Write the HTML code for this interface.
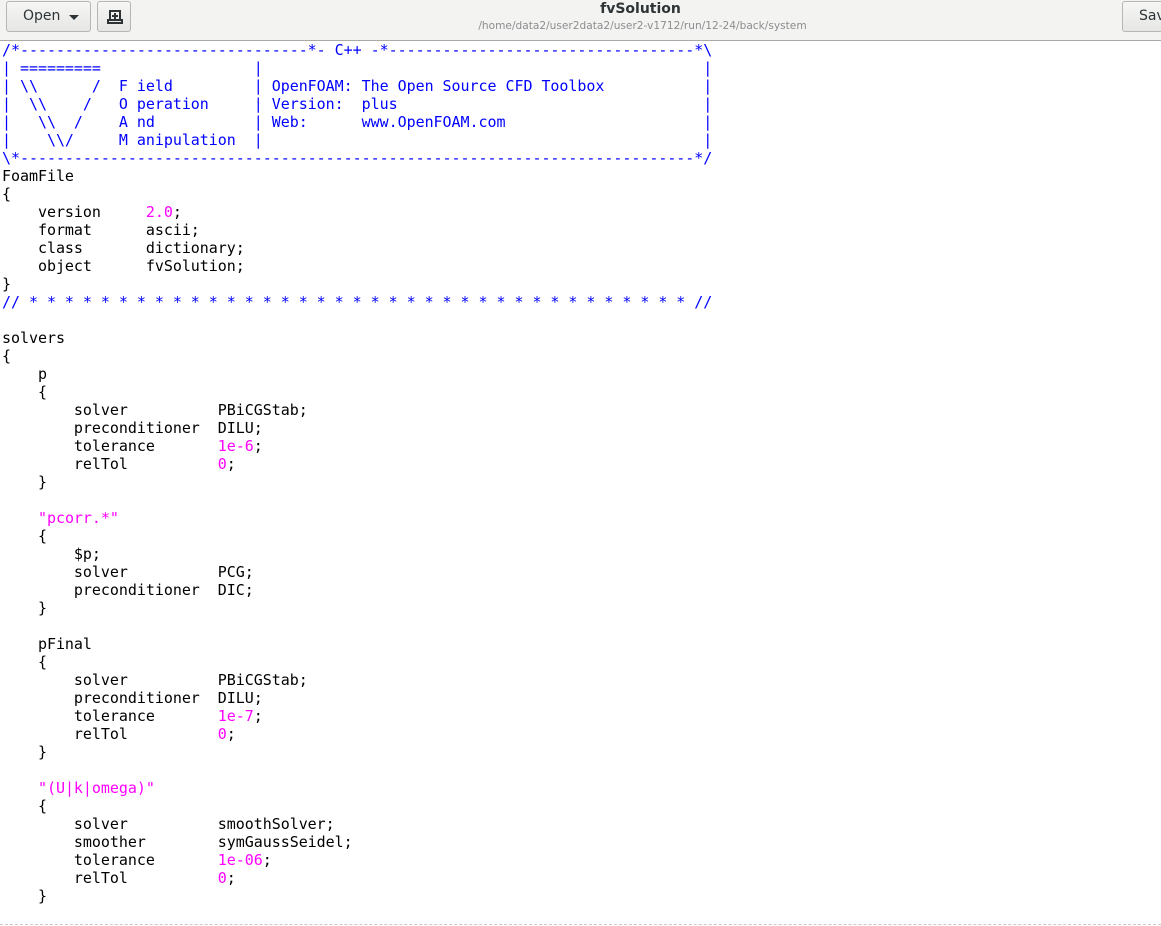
<!DOCTYPE html>
<html><head><meta charset="utf-8"><style>
html,body{margin:0;padding:0;width:1161px;height:926px;overflow:hidden;background:#fff}
.hdr{position:absolute;left:0;top:0;width:1161px;height:40px;background:#f3f3f2;border-bottom:1px solid #a9a9a7;font-family:"DejaVu Sans","Liberation Sans",sans-serif}
.btn{position:absolute;top:1px;height:31px;border:1px solid #b6b6b3;border-radius:3px;background:linear-gradient(#f6f6f5,#e6e6e4);box-sizing:border-box;font-size:14px;color:#2e3436}
.title{position:absolute;left:60px;width:1161px;text-align:center;top:1px;font-size:14px;font-weight:bold;color:#2e3436}
.sub{position:absolute;left:62px;width:1161px;text-align:center;top:20px;font-size:10.6px;color:#8b8e8f}
pre{position:absolute;left:2px;top:41px;margin:0;font-family:"DejaVu Sans Mono","Liberation Mono",monospace;font-size:15px;line-height:18px;letter-spacing:-0.04px;color:#000}
.c{color:#0000ff}.m{color:#ff00ff}
.dash{position:absolute;left:0;top:924px;width:1161px;border-top:1px dashed #c8c8c8}
</style></head><body>
<div class="hdr">
 <div class="btn" style="left:6px;width:85px"><span style="position:absolute;left:16px;top:6px">Open</span><span style="position:absolute;left:62px;top:13px;width:0;height:0;border-left:5px solid transparent;border-right:5px solid transparent;border-top:5px solid #2e3436"></span></div>
 <div class="btn" style="left:97px;width:34px"><svg style="position:absolute;left:9px;top:7px" width="16" height="16" viewBox="0 0 16 16"><path d="M3 2h10v9h-10z M1 11h14v3h-14z" fill="none" stroke="#2e3436" stroke-width="2"/><path d="M8 4v6M5 7h6" stroke="#2e3436" stroke-width="2"/></svg></div>
 <div class="title">fvSolution</div>
 <div class="sub">/home/data2/user2data2/user2-v1712/run/12-24/back/system</div>
 <div class="btn" style="left:1122px;width:60px"><span style="position:absolute;left:16px;top:6px">Save</span></div>
</div>
<pre><span class="c">/*--------------------------------*- C++ -*----------------------------------*\
| =========                 |                                                 |
| \\      /  F ield         | OpenFOAM: The Open Source CFD Toolbox           |
|  \\    /   O peration     | Version:  plus                                  |
|   \\  /    A nd           | Web:      www.OpenFOAM.com                      |
|    \\/     M anipulation  |                                                 |
\*---------------------------------------------------------------------------*/</span>
FoamFile
{
    version     <span class="m">2.0</span>;
    format      ascii;
    class       dictionary;
    object      fvSolution;
}
<span class="c">// * * * * * * * * * * * * * * * * * * * * * * * * * * * * * * * * * * * * * //</span>

solvers
{
    p
    {
        solver          PBiCGStab;
        preconditioner  DILU;
        tolerance       <span class="m">1e-6</span>;
        relTol          <span class="m">0</span>;
    }

    <span class="m">"pcorr.*"</span>
    {
        $p;
        solver          PCG;
        preconditioner  DIC;
    }

    pFinal
    {
        solver          PBiCGStab;
        preconditioner  DILU;
        tolerance       <span class="m">1e-7</span>;
        relTol          <span class="m">0</span>;
    }

    <span class="m">"(U|k|omega)"</span>
    {
        solver          smoothSolver;
        smoother        symGaussSeidel;
        tolerance       <span class="m">1e-06</span>;
        relTol          <span class="m">0</span>;
    }
</pre>
<div class="dash"></div>
</body></html>
